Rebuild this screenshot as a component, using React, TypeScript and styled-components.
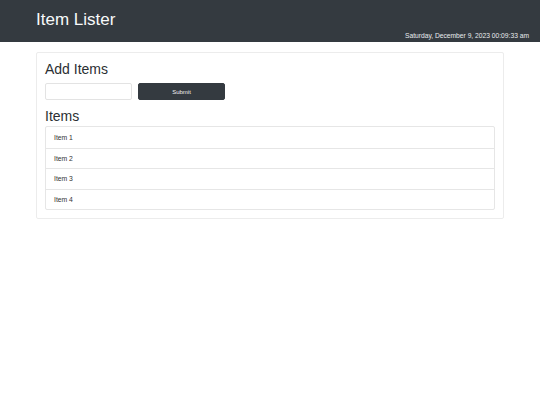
import React from "react";
import styled, { createGlobalStyle } from "styled-components";

const GlobalStyle = createGlobalStyle`
  html, body { margin: 0; padding: 0; background: #fff; }
  body { font-family: "Liberation Sans", Arial, sans-serif; color: #212529; }
  * { box-sizing: border-box; }
`;

const Header = styled.header`
  background: #343a40;
  height: 42px;
  display: flex;
  flex-direction: column;
`;

const HeaderInner = styled.div`
  width: 468px;
  margin: 0 auto;
  padding-top: 10px;
`;

const Title = styled.h1`
  margin: 0;
  font-size: 17px;
  line-height: 20px;
  font-weight: 400;
  color: #f8f9fa;
`;

const DateLine = styled.div`
  text-align: right;
  padding-right: 11px;
  font-size: 6.7px;
  line-height: 9px;
  margin-top: 1px;
  color: #e9ecef;
`;

const Container = styled.main`
  width: 468px;
  margin: 10px auto 0;
`;

const Card = styled.section`
  border: 1px solid #ececec;
  border-radius: 2px;
  padding: 8px;
`;

const Heading = styled.h2<{ $mt?: number }>`
  margin: ${(p) => p.$mt ?? 0}px 0 0;
  font-size: 14px;
  line-height: 17px;
  font-weight: 400;
  color: #2b2f33;
`;

const Form = styled.form`
  display: flex;
  gap: 6px;
  margin-top: 5px;
`;

const Input = styled.input`
  width: 87px;
  height: 17px;
  border: 1px solid #e3e3e3;
  border-radius: 2px;
  padding: 0 4px;
  font-size: 7px;
`;

const Button = styled.button`
  width: 87px;
  height: 17px;
  background: #343a40;
  border: 1px solid #343a40;
  border-radius: 2px;
  color: #f1f1f1;
  font-family: "Liberation Sans", Arial, sans-serif;
  font-size: 6px;
  padding: 0;
`;

const List = styled.ul`
  list-style: none;
  margin: 1px 0 0;
  padding: 0;
  border: 1px solid #e6e6e6;
  border-radius: 2px;
`;

const Row = styled.li`
  height: 20.6px;
  display: flex;
  align-items: center;
  padding-left: 8px;
  font-size: 6.8px;
  color: #333333;
  & + & {
    border-top: 1px solid #e6e6e6;
  }
`;

const items = ["Item 1", "Item 2", "Item 3", "Item 4"];

export default function App() {
  return (
    <>
      <GlobalStyle />
      <Header>
        <HeaderInner>
          <Title>Item Lister</Title>
        </HeaderInner>
        <DateLine>Saturday, December 9, 2023 00:09:33 am</DateLine>
      </Header>
      <Container>
        <Card>
          <Heading>Add Items</Heading>
          <Form onSubmit={(e) => e.preventDefault()}>
            <Input type="text" />
            <Button type="submit">Submit</Button>
          </Form>
          <Heading $mt={8}>Items</Heading>
          <List>
            {items.map((it) => (
              <Row key={it}>{it}</Row>
            ))}
          </List>
        </Card>
      </Container>
    </>
  );
}
